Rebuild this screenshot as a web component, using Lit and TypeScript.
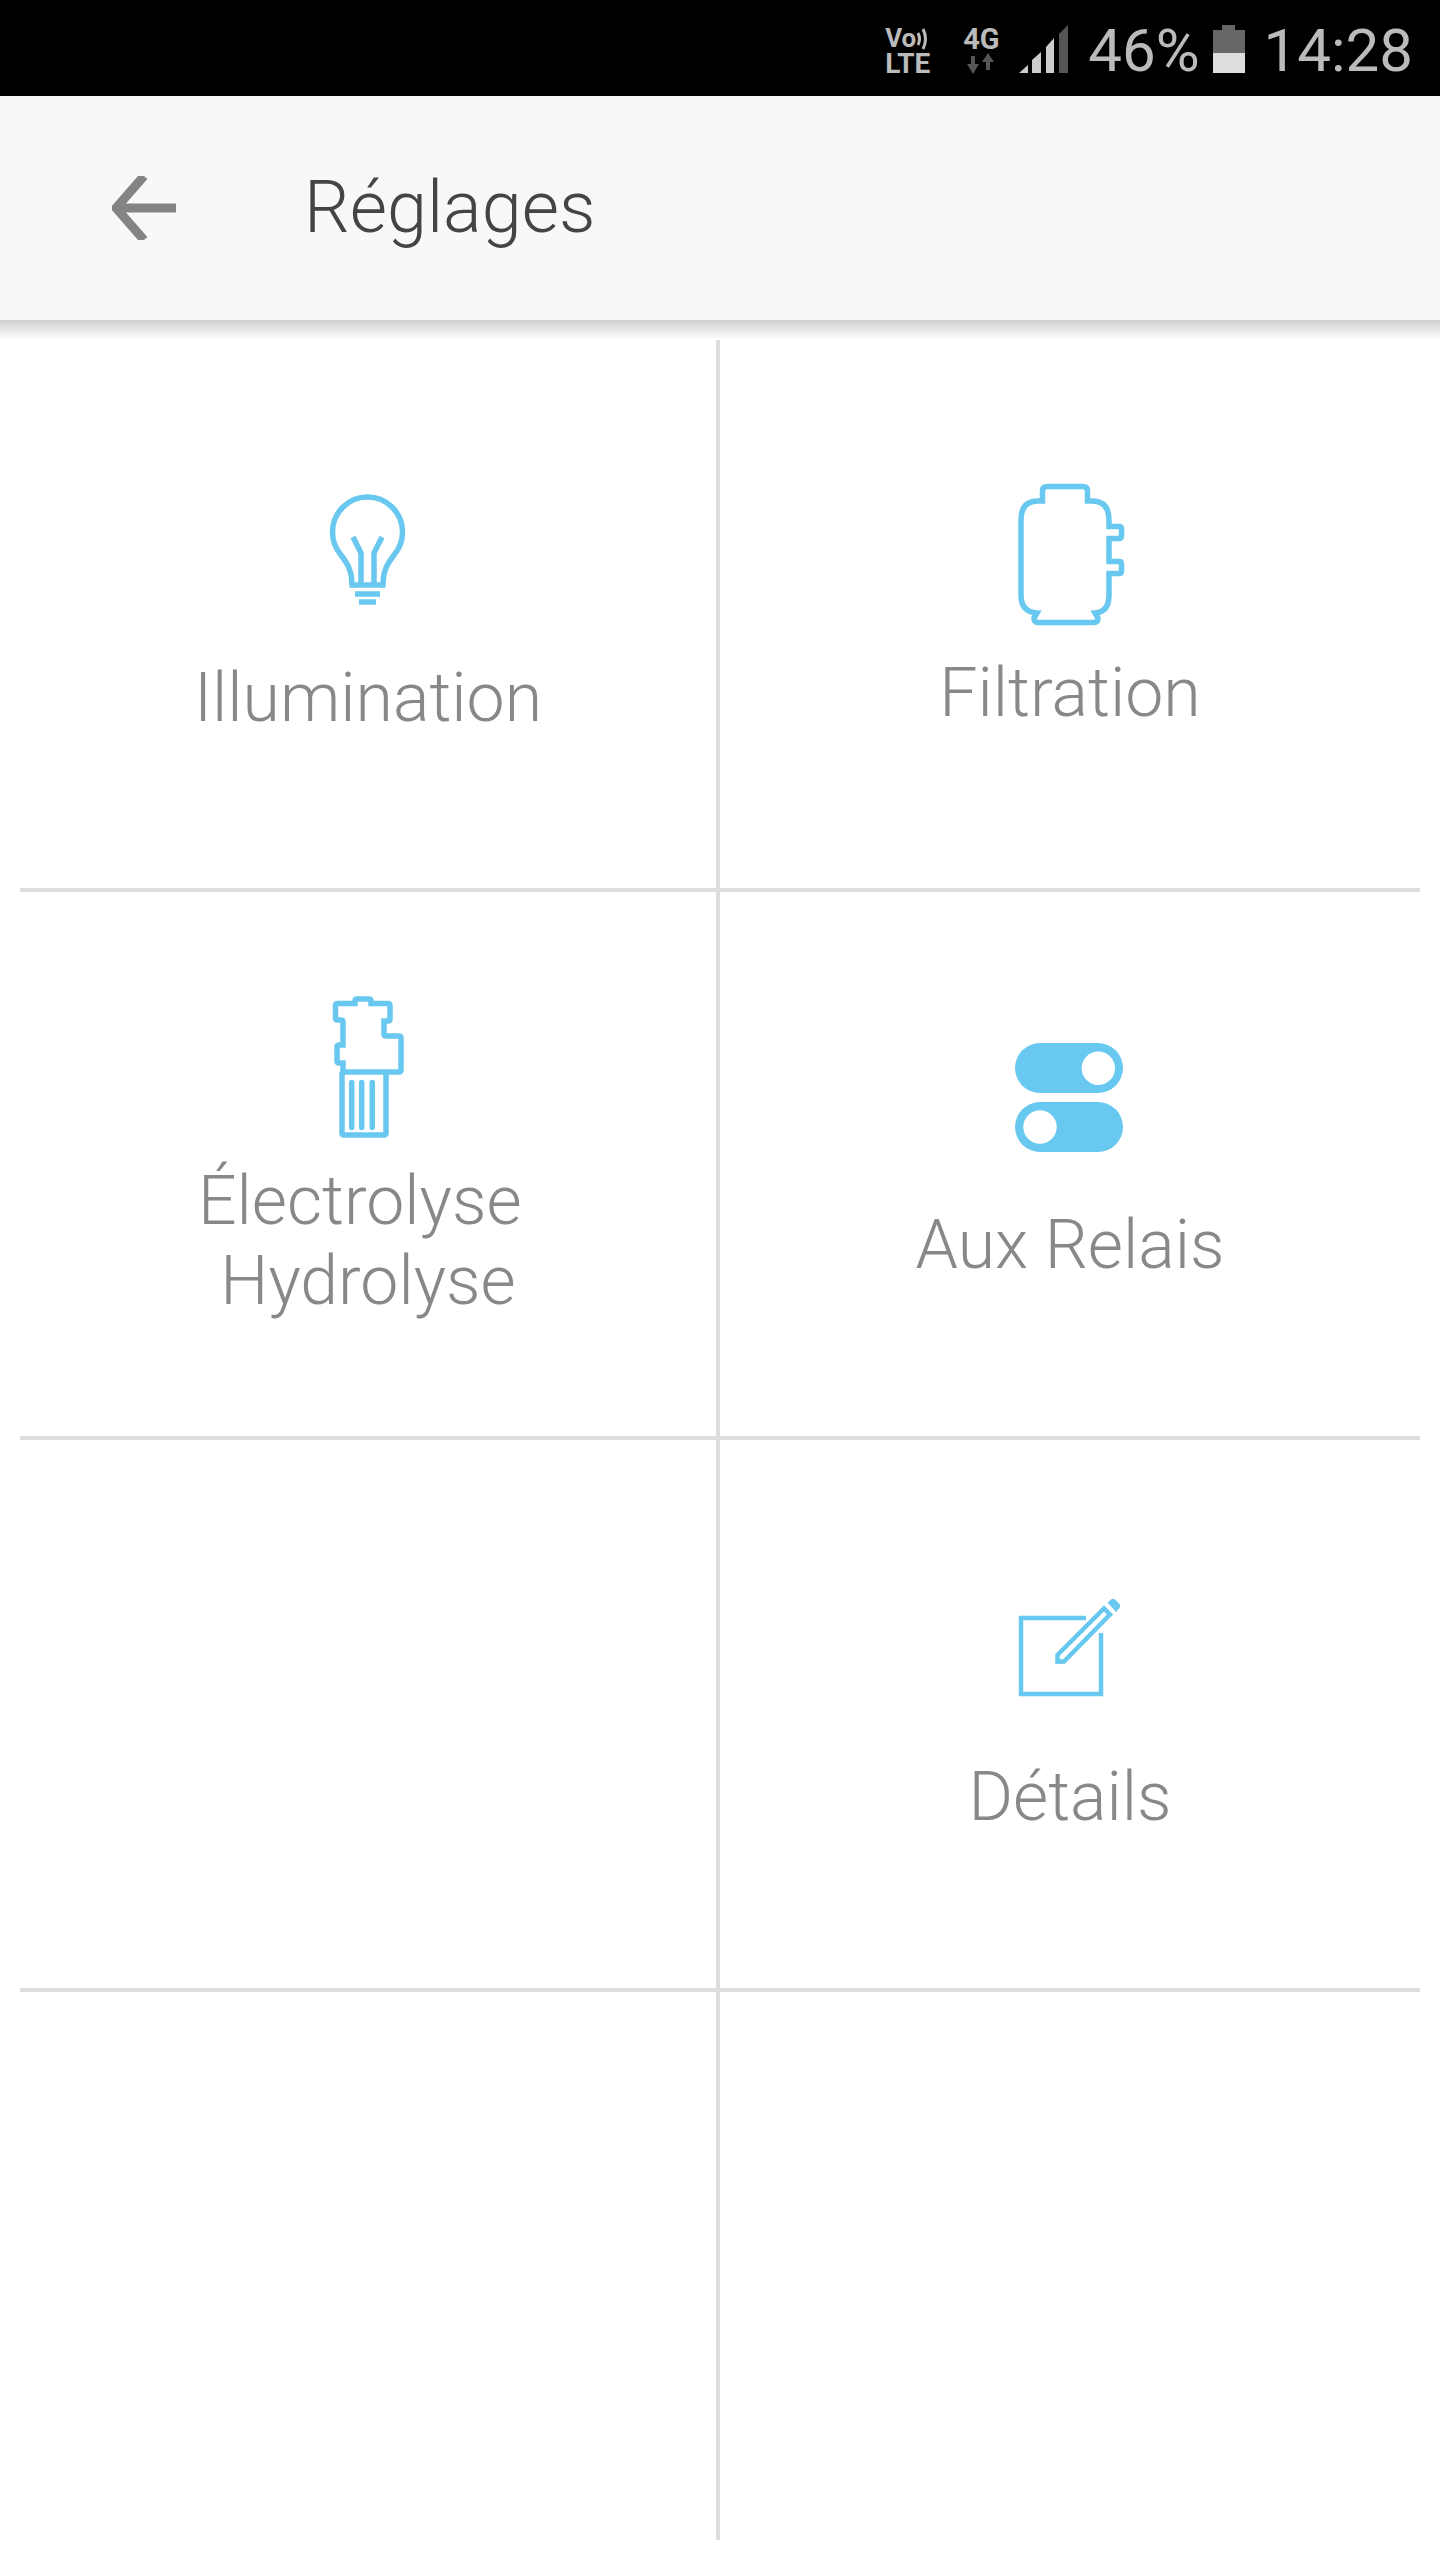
import {LitElement, html, css, svg} from 'lit';
import {customElement} from 'lit/decorators.js';

const bulb = svg`
  <path d="M52 115C52 100 47 93 41 85C35 78 32.5 72 32.5 62A35 35 0 0 1 102.5 62C102.5 72 100 78 94 85C88 93 83 100 83 115"/>
  <path d="M49.500 115H85.500"/>
  <path d="M53 67L61 83V114M82 67L74 83V114"/>
  <path d="M55 124H80M59 132H76"/>
`;

const tank = svg`
  <path d="M52.500 31V21Q52.500 16.500 57 16.500H93Q97.500 16.500 97.500 21V31H102Q119 31 119 50V56.500H129Q131.500 56.500 131.500 59V66Q131.500 68.500 129 68.500H119V91.500H129Q131.500 91.500 131.500 94V101Q131.500 103.500 129 103.500H119V125Q119 142 105 143L108 148Q108 152.500 104 152.500H48Q44 152.500 44 148L47 143Q31 142 31 125V50Q31 31 48 31Z"/>
`;

const cell = svg`
  <path d="M45 18.500V16Q45 14 47 14H59Q61 14 61 16V18.500H78Q80 18.500 80 20.500V34Q80 36 78 36H74V49Q74 51 76 51H89Q91 51 91 53V85Q91 87 89 87H33V78H29Q27 78 27 76V62Q27 60 29 60H33V37Q33 35 31 35H27.500Q25.500 35 25.500 33V20.500Q25.500 18.500 27.500 18.500Z"/>
  <path d="M32 87V148Q32 150 34 150H74Q76 150 76 148V87"/>
  <path class="round" d="M41.700 97.500V142.500M51.700 97.500V142.500M62.300 97.500V142.500"/>
`;

const toggles = svg`
  <rect class="solid" x="15" y="13" width="108" height="50" rx="25"/>
  <circle class="knob" cx="98.300" cy="38.300" r="16.700"/>
  <rect class="solid" x="15" y="72" width="108" height="50" rx="25"/>
  <circle class="knob" cx="40" cy="97" r="16.700"/>
`;

const note = svg`
  <path class="thin" d="M86 33H21V109H101V48"/>
  <path class="thin" d="M57.500 76.500V70L104 23.500L110 29.500L64 76.500Z"/>
  <path class="solid" d="M56 70.500V78.500H64ZM107.500 17.500L111 14.500Q113 13 115 14.500L119.500 19Q121 21 119.500 23L116 27Z"/>
`;

interface Tile {
  name: string;
  label?: string;
  icon?: unknown;
  box?: [number, number, number, number];
}

const tiles: Tile[] = [
  {name: 'illumination', label: 'Illumination', icon: bulb, box: [-2, 0, 140, 150]},
  {name: 'filtration', label: 'Filtration', icon: tank, box: [0, 0, 160, 160]},
  {name: 'electrolysis', label: 'Électrolyse\u00a0\nHydrolyse', icon: cell, box: [-2, 0, 120, 160]},
  {name: 'relays', label: 'Aux Relais', icon: toggles, box: [0, 0, 140, 140]},
  {name: 'blank'},
  {name: 'details', label: 'Détails', icon: note, box: [0, 0, 140, 125]},
  {name: 'blank'},
  {name: 'blank'},
];

@customElement('app-root')
export class AppRoot extends LitElement {
  private renderStatusBar() {
    return html`
      <div class="status">
        <div class="volte">
          <div class="vo">Vo<svg width="14" height="24" viewBox="0 0 14 24"><path d="M2 6Q5 12 2 18M7 2Q12 12 7 22"/></svg></div>
          <div class="lte">LTE</div>
        </div>
        <div class="network">
          <div class="net-label">4G</div>
          <svg width="30" height="18" viewBox="0 0 30 18">
            <path d="M6 0H10V8H14L8 18L2 8H6Z"/>
            <path d="M21 14H25V6H29L23 -3L17 6H21Z"/>
          </svg>
        </div>
        <svg class="signal" width="49" height="48" viewBox="0 0 49 48">
          <path class="bar" d="M0 48L9 40V48Z"/>
          <path class="bar" d="M13 48V35L22 27V48Z"/>
          <path class="bar" d="M27 48V22L35 13V48Z"/>
          <path class="bar-off" d="M40 48V9L49 0V48Z"/>
        </svg>
        <span class="pct">46%</span>
        <div class="battery"><div class="cap"></div><div class="empty"></div><div class="full"></div></div>
        <span class="clock">14:28</span>
      </div>
    `;
  }

  render() {
    return html`
      ${this.renderStatusBar()}
      <header class="toolbar">
        <svg class="back" width="64" height="64" viewBox="0 0 64 64">
          <path d="M32 0L4 32L32 64M4 32H64"/>
        </svg>
        <h1 class="title">Réglages</h1>
      </header>
      <main class="grid">
        ${tiles.map(t => html`
          <div class="tile ${t.name}">
            ${t.icon ? html`
              <svg class="icon" width=${t.box![2]} height=${t.box![3]} viewBox=${t.box!.join(' ')}>${t.icon}</svg>
              <div class="label">${t.label}</div>
            ` : ''}
          </div>
        `)}
      </main>
    `;
  }

  static styles = css`
    :host {
      display: block;
      font-family: Roboto, sans-serif;
      background: #fff;
      min-height: 2560px;
    }

    .status {
      height: 96px;
      background: #000;
      display: flex;
      align-items: center;
      justify-content: flex-end;
      padding-right: 27px;
      color: #bbb;
    }
    .volte {
      width: 46px;
      font-weight: 700;
      font-size: 28px;
      line-height: 25px;
      margin: 6px 32px 0 0;
      white-space: nowrap;
    }
    .vo {
      display: flex;
      align-items: center;
      font-size: 26px;
    }
    .vo svg {
      flex: none;
      fill: none;
      stroke: #bbb;
      stroke-width: 3;
    }
    .network {
      width: 37px;
      margin: 3px 19px 0 0;
      font-weight: 700;
    }
    .net-label {
      font-size: 29px;
      line-height: 28px;
      margin-bottom: 3px;
    }
    .network svg {
      display: block;
      fill: #555;
      overflow: visible;
      margin-left: 2px;
    }
    .signal {
      margin: 2px 20px 0 0;
    }
    .bar {
      fill: #ccc;
    }
    .bar-off {
      fill: #555;
    }
    .pct,
    .clock {
      font-size: 60px;
      line-height: 96px;
      margin-top: 6px;
    }
    .battery {
      width: 32px;
      margin: 2px 19px 0 13px;
      display: flex;
      flex-direction: column;
      align-items: center;
    }
    .cap {
      width: 13px;
      height: 5px;
      background: #666;
    }
    .empty {
      width: 100%;
      height: 23px;
      background: #666;
    }
    .full {
      width: 100%;
      height: 20px;
      background: #ddd;
    }

    .toolbar {
      height: 224px;
      background: #f8f8f8;
      display: flex;
      align-items: center;
      padding-left: 112px;
      position: relative;
      margin-bottom: 20px;
    }
    /* soft edge under the toolbar */
    .toolbar::after {
      content: '';
      position: absolute;
      left: 0;
      right: 0;
      top: 100%;
      height: 20px;
      background: linear-gradient(#cfcfcf, #fff);
    }
    .back {
      fill: none;
      stroke: #848484;
      stroke-width: 9;
      margin-right: 128px;
    }
    .title {
      margin: 0 0 2px;
      font-size: 72px;
      font-weight: 300;
      color: #444;
    }

    .grid {
      display: grid;
      grid-template-columns: 700px 700px;
      grid-template-rows: 552px 548px 552px 548px;
      padding: 0 20px;
    }
    .tile {
      box-sizing: border-box;
      display: flex;
      flex-direction: column;
      align-items: center;
      border-bottom: 4px solid #ddd;
    }
    .tile:nth-child(odd) {
      border-right: 4px solid #ddd;
    }
    .tile:nth-last-child(-n + 2) {
      border-bottom: 0;
    }

    .icon {
      display: block;
      flex: none;
      fill: none;
      stroke: #68c8f0;
      stroke-width: 5.5;
    }
    .icon .solid {
      fill: #68c8f0;
      stroke: none;
    }
    .icon .knob {
      fill: #fff;
      stroke: none;
    }
    .icon .thin {
      stroke-width: 4.5;
    }
    .icon .round {
      stroke-linecap: round;
    }
    .label {
      font-size: 68px;
      font-weight: 300;
      line-height: 80px;
      color: #888;
      text-align: center;
      white-space: pre-line;
    }

    .illumination { padding-top: 130px; }
    .illumination .label { margin-top: 38px; }
    .filtration { padding-top: 130px; }
    .filtration .label { margin-top: 23px; }
    .electrolysis { padding-top: 93px; }
    .electrolysis .label { margin-top: 16px; }
    .relays { padding-top: 138px; }
    .relays .label { margin-top: 35px; }
    .details { padding-top: 145px; }
    .details .label { margin-top: 47px; }
  `;
}

declare global {
  interface HTMLElementTagNameMap {
    'app-root': AppRoot;
  }
}
